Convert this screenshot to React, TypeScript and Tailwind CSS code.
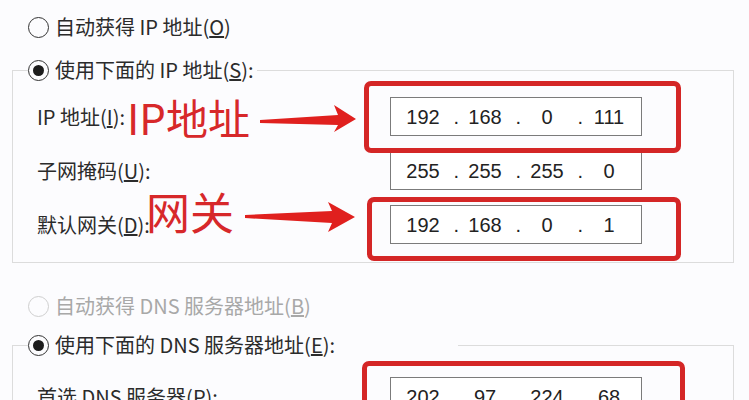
import React from 'react';

// Radio circle, drawn like the Windows classic control
function Radio({ checked, disabled }: { checked?: boolean; disabled?: boolean }) {
  return (
    <span
      className={`flex h-[21px] w-[21px] shrink-0 items-center justify-center rounded-full border-[1.5px] ${
        disabled ? 'border-[#cfcfcf]' : 'border-[#333333]'
      }`}
    >
      {checked && <span className="h-[11px] w-[11px] rounded-full bg-[#1c1c1c]" />}
    </span>
  );
}

function RadioRow({
  children,
  checked,
  disabled,
}: {
  children: React.ReactNode;
  checked?: boolean;
  disabled?: boolean;
}) {
  return (
    <div className="flex h-[30px] items-center gap-[6px]">
      <Radio checked={checked} disabled={disabled} />
      <span className={`text-[20px] leading-none ${disabled ? 'text-[#a8a8a8]' : 'text-[#2b2b2b]'}`}>
        {children}
      </span>
    </div>
  );
}

// Four octet IP address box
function IpField({ octets }: { octets: string[] }) {
  return (
    <div className="flex h-[39px] w-[252px] items-center border border-[#7b7b7b] bg-white pl-[7px] font-['Liberation_Sans',sans-serif] text-[20px] text-[#222222]">
      {octets.map((o, i) => (
        <React.Fragment key={i}>
          <span className="w-[50px] text-center">{o}</span>
          {i < 3 && <span className="w-[12px] pr-[1px] text-right">.</span>}
        </React.Fragment>
      ))}
    </div>
  );
}

function FieldRow({ label, octets }: { label: React.ReactNode; octets: string[] }) {
  return (
    <div className="flex items-center">
      <span className="w-[353px] text-[20px] leading-none text-[#2b2b2b]">{label}</span>
      <IpField octets={octets} />
    </div>
  );
}

export default function App() {
  return (
    <div className="relative h-[400px] w-[749px] overflow-hidden bg-[#fcfcfe] font-['Noto_Sans_CJK_SC','Noto_Sans',sans-serif]">
      {/* IP section */}
      <div className="pl-[28px] pt-[12px]">
        <RadioRow>
          自动获得 IP 地址(<span className="underline">O</span>)
        </RadioRow>
      </div>

      <fieldset className="ml-[12px] mt-[13px] w-[722px] border border-[#dcdcdc] pb-[18px] pl-[24px]">
        <legend className="-ml-[9px] pr-[3px]">
          <RadioRow checked>
            使用下面的 IP 地址(<span className="underline">S</span>):
          </RadioRow>
        </legend>
        <div className="mt-[12px] flex flex-col gap-[15px]">
          <FieldRow
            label={<>IP 地址(<span className="underline">I</span>):</>}
            octets={['192', '168', '0', '111']}
          />
          <FieldRow
            label={<>子网掩码(<span className="underline">U</span>):</>}
            octets={['255', '255', '255', '0']}
          />
          <FieldRow
            label={<>默认网关(<span className="underline">D</span>):</>}
            octets={['192', '168', '0', '1']}
          />
        </div>
      </fieldset>

      {/* DNS section */}
      <div className="mt-[28px] pl-[28px]">
        <RadioRow disabled>
          自动获得 DNS 服务器地址(<span className="underline">B</span>)
        </RadioRow>
      </div>

      <fieldset className="ml-[12px] mt-[9px] w-[722px] border border-[#dcdcdc] pb-[18px] pl-[24px]">
        <legend className="-ml-[9px] w-[430px]">
          <RadioRow checked>
            使用下面的 DNS 服务器地址(<span className="underline">E</span>):
          </RadioRow>
        </legend>
        <div className="mt-[17px] flex flex-col gap-[15px]">
          <FieldRow
            label={<>首选 DNS 服务器(<span className="underline">P</span>):</>}
            octets={['202', '97', '224', '68']}
          />
        </div>
      </fieldset>

      {/* Red annotations laid over the dialog */}
      <div className="pointer-events-none absolute left-[364px] top-[81px] h-[72px] w-[317px] rounded-[7px] border-[5px] border-[#d42626]" />
      <div className="pointer-events-none absolute left-[367px] top-[197px] h-[64px] w-[314px] rounded-[7px] border-[5px] border-[#d42626]" />
      <div className="pointer-events-none absolute left-[362px] top-[361px] h-[70px] w-[323px] rounded-[7px] border-[5px] border-[#d42626]" />

      <span className="pointer-events-none absolute left-[127px] top-[96px] text-[42px] leading-none text-[#d7282a]">
        IP地址
      </span>
      <span className="pointer-events-none absolute left-[146px] top-[189px] text-[44px] leading-none text-[#d7282a]">
        网关
      </span>

      <svg className="pointer-events-none absolute left-0 top-0" width="749" height="400" viewBox="0 0 749 400">
        <polygon
          points="260,120 338,115 334,105 356,119 334,132 338,125 260,123"
          fill="#e0201e"
        />
        <polygon
          points="245,215 332,211 328,202 355,217 328,232 332,223 245,218"
          fill="#e0201e"
        />
      </svg>
    </div>
  );
}
